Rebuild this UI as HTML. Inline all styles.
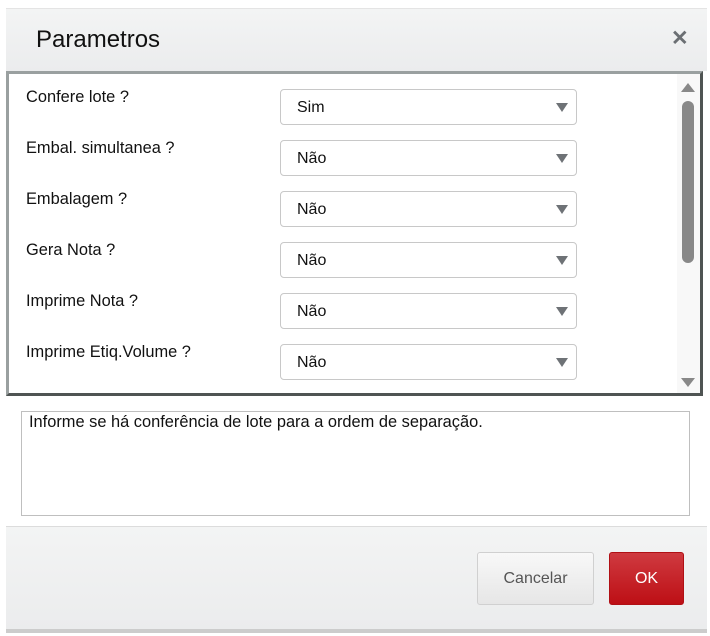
<!DOCTYPE html>
<html><head><meta charset="utf-8"><style>
*{box-sizing:border-box;margin:0;padding:0}
body{width:710px;height:636px;background:#fff;font-family:"Liberation Sans",Arial,sans-serif;position:relative;overflow:hidden}
.dlg{position:absolute;left:6px;top:8px;width:701px;height:624px;background:#fff;border-top:1px solid #e4e4e4}
.hdr{position:absolute;left:0;top:0;width:701px;height:62px;background:linear-gradient(#f3f4f4,#ebeced)}
.hdr h1{position:absolute;left:30px;top:17px;font-size:24px;font-weight:normal;color:#111}
.x{position:absolute;left:665px;top:17px;font-size:21px;font-weight:bold;color:#6b6f73}
.box{position:absolute;left:0;top:62px;width:697px;height:325px;border-top:3px solid #9aa0a0;border-left:3px solid #9aa0a0;border-right:3px solid #4f5453;border-bottom:3px solid #4f5453;background:#fff}
.row{position:absolute;left:17px;font-size:16.4px;color:#111}
.sel{position:absolute;left:271px;width:297px;height:36px;border:1px solid #c8c8c8;border-radius:4px;font-size:16px;color:#111;padding:9px 0 0 16px}
.sel:after{content:"";position:absolute;right:8px;top:13px;border-left:6px solid transparent;border-right:6px solid transparent;border-top:9px solid #6e7276}
.track{position:absolute;left:668px;top:0;width:23px;height:319px;background:#f8f8f8}
.thumb{position:absolute;left:5px;top:27px;width:12px;height:162px;background:#888;border-radius:6px}
.up{position:absolute;left:4px;top:9px;border-left:7px solid transparent;border-right:7px solid transparent;border-bottom:9px solid #888}
.dn{position:absolute;left:4px;top:304px;border-left:7px solid transparent;border-right:7px solid transparent;border-top:9px solid #888}
.help{position:absolute;left:15px;top:402px;width:669px;height:105px;border:1px solid #bfbfbf;font-size:16.4px;color:#111;padding:1px 7px}
.ftr{position:absolute;left:0;top:517px;width:701px;height:103px;background:linear-gradient(#f3f4f4,#ebeced);border-top:1px solid #dcdcdc}
.bottom{position:absolute;left:0;top:620px;width:701px;height:4px;background:#ccc}
.btn{position:absolute;top:25px;height:53px;border-radius:3px;font-size:16px;text-align:center;line-height:51px}
.cancel{left:471px;width:117px;background:linear-gradient(#f8f8f8,#e6e6e6);border:1px solid #d0d0d0;color:#555}
.ok{left:603px;width:75px;background:linear-gradient(#cf3a40,#bd0f15);color:#fff;border:1px solid #b01015}
</style></head><body>
<div class="dlg">
<div class="hdr"><h1>Parametros</h1><div class="x">✕</div></div>
<div class="box">
<div class="row" style="top:14px">Confere lote ?</div><div class="sel" style="top:15px">Sim</div>
<div class="row" style="top:65px">Embal. simultanea ?</div><div class="sel" style="top:66px">Não</div>
<div class="row" style="top:116px">Embalagem ?</div><div class="sel" style="top:117px">Não</div>
<div class="row" style="top:167px">Gera Nota ?</div><div class="sel" style="top:168px">Não</div>
<div class="row" style="top:218px">Imprime Nota ?</div><div class="sel" style="top:219px">Não</div>
<div class="row" style="top:269px">Imprime Etiq.Volume ?</div><div class="sel" style="top:270px">Não</div>
<div class="track"><div class="up"></div><div class="thumb"></div><div class="dn"></div></div>
</div>
<div class="help">Informe se há conferência de lote para a ordem de separação.</div>
<div class="ftr"><div class="btn cancel">Cancelar</div><div class="btn ok">OK</div></div>
<div class="bottom"></div>
</div>
</body></html>
